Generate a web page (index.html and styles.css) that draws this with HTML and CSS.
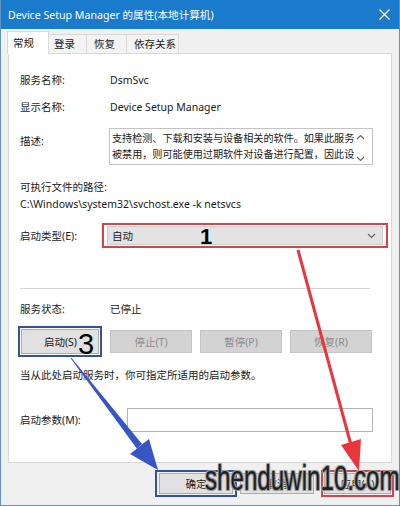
FILE: index.html
```html
<!DOCTYPE html>
<html lang="zh-CN">
<head>
    <meta charset="UTF-8">
    <meta name="viewport" content="width=device-width, initial-scale=1.0">
    <title>Device Setup Manager 的属性(本地计算机)</title>
    <link rel="stylesheet" href="styles.css">
</head>
<body>

<div class="window">
    <div class="titlebar">
        <span class="title">Device Setup Manager 的属性(本地计算机)</span>
        <span class="close">
            <svg width="11" height="11" viewBox="0 0 11 11"><path d="M0.5 0.5 L10.5 10.5 M10.5 0.5 L0.5 10.5" stroke="#fff" stroke-width="1.2"/></svg>
        </span>
    </div>

    <div class="tabs">
        <div class="tab active">常规</div>
        <div class="tab t-login">登录</div>
        <div class="tab t-recover">恢复</div>
        <div class="tab t-deps">依存关系</div>
    </div>

    <div class="panel">
        <div class="row r-name">
            <span class="label">服务名称:</span>
            <span class="value">DsmSvc</span>
        </div>
        <div class="row r-display">
            <span class="label">显示名称:</span>
            <span class="value">Device Setup Manager</span>
        </div>
        <div class="row r-desc">
            <span class="label desc-label">描述:</span>
            <div class="desc-box">
                <p>支持检测、下载和安装与设备相关的软件。如果此服务<br>被禁用，则可能使用过期软件对设备进行配置，因此设</p>
                <div class="scroll">
                    <svg width="9" height="6" viewBox="0 0 9 6"><path d="M1 5 L4.5 1.5 L8 5" stroke="#606060" fill="none" stroke-width="1.1"/></svg>
                    <svg width="9" height="6" viewBox="0 0 9 6"><path d="M1 1 L4.5 4.5 L8 1" stroke="#606060" fill="none" stroke-width="1.1"/></svg>
                </div>
            </div>
        </div>
        <div class="line r-pathlabel">可执行文件的路径:</div>
        <div class="line r-path">C:\Windows\system32\svchost.exe -k netsvcs</div>
        <div class="row r-type">
            <span class="label">启动类型(E):</span>
            <div class="mark-red">
                <div class="select">
                    <span>自动</span>
                    <svg width="9" height="6" viewBox="0 0 9 6"><path d="M1 1 L4.5 4.5 L8 1" stroke="#606060" fill="none" stroke-width="1.1"/></svg>
                </div>
                <span class="num num-1">1</span>
            </div>
        </div>
        <div class="sep"></div>
        <div class="row r-status">
            <span class="label">服务状态:</span>
            <span class="value">已停止</span>
        </div>
        <div class="btn-row">
            <div class="mark-blue">
                <button class="btn">启动(S)</button>
                <span class="num num-3">3</span>
            </div>
            <button class="btn disabled">停止(T)</button>
            <button class="btn disabled">暂停(P)</button>
            <button class="btn disabled">恢复(R)</button>
        </div>
        <div class="line r-hint">当从此处启动服务时，你可指定所适用的启动参数。</div>
        <div class="row r-param">
            <span class="label param-label">启动参数(M):</span>
            <div class="param-input"></div>
        </div>
    </div>

    <div class="footer">
        <div class="mark-blue foot-mark">
            <button class="btn foot-btn">确定</button>
        </div>
        <button class="btn foot-btn">取消</button>
        <div class="mark-red foot-mark">
            <button class="btn foot-btn">应用(A)</button>
        </div>
    </div>

    <!-- annotation arrows drawn over the dialog -->
    <svg class="arrows" width="400" height="506" viewBox="0 0 400 506">
        <line x1="297" y1="250" x2="350" y2="445" stroke="#e8363c" stroke-width="3"/>
        <polygon points="358,471 360,439 340,445" fill="#e8363c"/>
        <polygon points="69.6,358.3 70.4,357.7 141,444 136,448.7" fill="#3656c6"/>
        <polygon points="157,470 148,439 129,454" fill="#3656c6"/>
    </svg>

    <div class="watermark">shenduwin10.com</div>
</div>

</body>
</html>
```

FILE: styles.css
```css
body {
    margin: 0;
    background: #f0f0f0;
    font-family: "Noto Sans", "Noto Sans CJK SC", sans-serif;
    font-size: 10.5px;
    color: #1a1a1a;
}
.window {
    position: relative;
    width: 398px;
    height: 505px;
    background: #f0f0f0;
    border: 1px solid #5f93bd;
    border-top: none;
    overflow: hidden;
}
.titlebar {
    height: 29px;
    background: #1a7acb;
    color: #fff;
    display: flex;
    align-items: center;
    justify-content: space-between;
    padding: 0 8px 0 7px;
}
.title {
    font-size: 10.6px;
}
.close {
    display: flex;
    margin-right: 1px;
}
.tabs {
    height: 24px;
    display: flex;
    align-items: flex-end;
    padding-left: 7px;
}
.tab {
    height: 19px;
    line-height: 18px;
    padding-left: 5px;
    border: 1px solid #d9d9d9;
    border-bottom: none;
    margin-left: -1px;
    background: #f3f3f3;
    position: relative;
    box-sizing: border-box;
}
.tab.active {
    width: 42px;
    height: 23px;
    line-height: 22px;
    background: #fff;
    margin-bottom: -1px;
    z-index: 1;
}
.t-login { width: 39px; }
.t-recover { width: 41px; padding-left: 7px; }
.t-deps { width: 53px; padding-left: 7px; }
.panel {
    margin: 0 7px;
    height: 408px;
    background: #fff;
    border: 1px solid #d9d9d9;
    padding: 0 11px;
}
.row {
    display: flex;
    align-items: center;
}
.label {
    width: 90px;
    flex-shrink: 0;
}
.line, .row {
    line-height: 16px;
}
.r-name { margin-top: 18px; }
.r-display { margin-top: 11px; }
.r-desc {
    margin-top: 13px;
    align-items: flex-start;
}
.desc-label {
    width: 89px;
    padding-top: 5px;
}
.desc-box {
    width: 262px;
    height: 35px;
    border: 1px solid #c3c3c3;
    display: flex;
    justify-content: space-between;
}
.desc-box p {
    margin: 0;
    padding: 1px 0 0 2px;
    width: 248px;
    line-height: 16px;
    font-size: 10.1px;
    white-space: nowrap;
    height: 34px;
}
.scroll {
    width: 12px;
    display: flex;
    flex-direction: column;
    justify-content: space-between;
    padding: 5px 4px 2px 0;
}
.r-pathlabel { margin-top: 14px; }
.r-path { margin-top: 1px; }
.r-type { margin-top: 11px; }
.r-type .label {
    width: 82px;
}
.mark-red {
    position: relative;
    border: 2px solid #d2434c;
    padding: 1px 3px;
}
.select {
    width: 264px;
    height: 17px;
    background: #e3e3e3;
    border: 1px solid #cfcfcf;
    display: flex;
    align-items: center;
    justify-content: space-between;
    padding: 0 6px 0 4px;
}
.num {
    position: absolute;
    font-family: "Liberation Sans", sans-serif;
    color: #000;
    line-height: 1;
}
.num-1 {
    left: 96px;
    top: 1px;
    font-size: 22px;
    font-weight: bold;
}
.sep {
    margin-top: 40px;
    height: 1px;
    width: 350px;
    background: #d5d5d5;
}
.r-status { margin-top: 12px; }
.btn-row {
    margin-top: 9px;
    height: 31px;
    display: flex;
    align-items: center;
    margin-left: -2px;
}
.mark-blue {
    position: relative;
    border: 2px solid #34519f;
    padding: 1px;
}
.btn {
    font-family: "Noto Sans", "Noto Sans CJK SC", sans-serif;
    font-size: 10.5px;
    width: 80px;
    height: 23px;
    padding: 0;
    background: #e1e1e1;
    border: 1px solid #adadad;
    color: #1a1a1a;
}
.mark-blue .btn {
    width: 78px;
    height: 25px;
    text-align: right;
    padding-right: 21px;
}
.num-3 {
    left: 58px;
    top: 2px;
    font-size: 29px;
}
.btn.disabled {
    background: #d3d3d3;
    border-color: #c4c4c4;
    color: #8a8a8a;
    width: 82px;
    margin-left: 8px;
}
.r-hint { margin-top: 10px; }
.r-param { margin-top: 25px; }
.param-label {
    width: 107px;
}
.param-input {
    width: 244px;
    height: 22px;
    border: 1px solid #b3b3b3;
}
.footer {
    height: 41px;
    display: flex;
    align-items: center;
    padding-left: 154px;
    gap: 3px;
}
.foot-mark {
    padding: 1px 2px;
}
.foot-btn {
    width: 74px;
    height: 21px;
}
.mark-blue .foot-btn {
    width: 74px;
    height: 21px;
    padding: 0;
    text-align: center;
}
.footer .mark-red {
    margin-left: 4px;
    padding: 1px 1px;
}
.footer .mark-red .foot-btn {
    width: 67px;
}
.arrows {
    position: absolute;
    left: 0;
    top: 0;
    pointer-events: none;
}
.watermark {
    position: absolute;
    left: 204px;
    top: 458px;
    font-family: "Liberation Sans", sans-serif;
    font-size: 35px;
    color: #202020;
    white-space: nowrap;
    transform: scaleX(0.69);
    transform-origin: left top;
    text-shadow: 1px 1px 0 #9a9a9a, -1px -1px 0 #9a9a9a, 1px -1px 0 #9a9a9a, -1px 1px 0 #9a9a9a, 0 0 3px #bbb;
}
```
